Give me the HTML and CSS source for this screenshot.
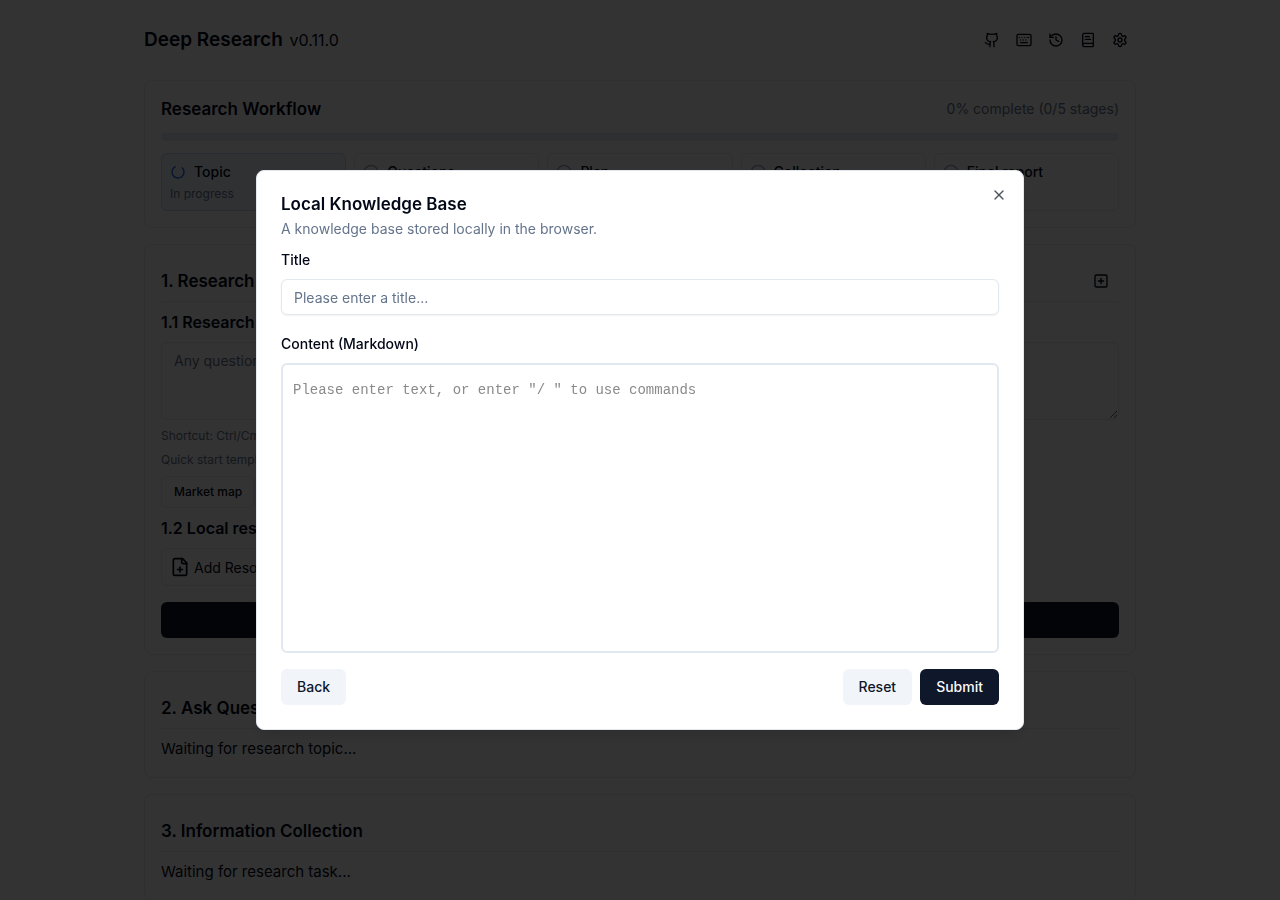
FILE: index.html
```html
<!DOCTYPE html>
<html lang="en">
<head>
  <meta charset="UTF-8" />
  <meta name="viewport" content="width=device-width, initial-scale=1" />
  <title>Deep Research</title>
  <link rel="stylesheet" href="styles.css">
</head>
<body>
  <div class="container">
    <header class="header">
      <h1>Deep Research <small>v0.11.0</small></h1>
      <div class="toolbar">
        <a class="icon-btn" href="#" aria-label="GitHub">
          <svg class="icon" viewBox="0 0 24 24"><path d="M15 22v-4a4.8 4.8 0 0 0-1-3.5c3 0 6-2 6-5.5.08-1.25-.27-2.48-1-3.5.28-1.15.28-2.35 0-3.5 0 0-1 0-3 1.5-2.64-.5-5.36-.5-8 0C6 2 5 2 5 2c-.3 1.15-.3 2.35 0 3.5A5.403 5.403 0 0 0 4 9c0 3.5 3 5.5 6 5.5-.39.49-.68 1.05-.85 1.65-.17.6-.22 1.23-.15 1.85v4"/><path d="M9 18c-4.51 2-5-2-7-2"/></svg>
        </a>
        <button class="icon-btn" aria-label="Shortcuts">
          <svg class="icon" viewBox="0 0 24 24"><rect width="21" height="17" x="1.500" y="3.500" rx="2"/><path d="M5 8h.01M9 8h.01M13 8h.01M17 8h.01M7 12h.01M11 12h.01M15 12h.01M19 8h.01M7 16h10"/></svg>
        </button>
        <button class="icon-btn" aria-label="History">
          <svg class="icon" viewBox="0 0 24 24"><path d="M3 12a9 9 0 1 0 9-9 9.75 9.75 0 0 0-6.74 2.74L3 8"/><path d="M3 3v5h5"/><path d="M12 7v5l4 2"/></svg>
        </button>
        <button class="icon-btn" aria-label="Knowledge">
          <svg class="icon" viewBox="0 0 24 24"><path d="M4 19.5v-15A2.5 2.5 0 0 1 6.5 2H19a1 1 0 0 1 1 1v18a1 1 0 0 1-1 1H6.5a1 1 0 0 1 0-5H20"/><path d="M8 11h8"/><path d="M8 7h6"/></svg>
        </button>
        <button class="icon-btn" aria-label="Setting">
          <svg class="icon" viewBox="0 0 24 24"><path d="M12.22 2h-.44a2 2 0 0 0-2 2v.18a2 2 0 0 1-1 1.73l-.43.25a2 2 0 0 1-2 0l-.15-.08a2 2 0 0 0-2.73.73l-.22.38a2 2 0 0 0 .73 2.73l.15.1a2 2 0 0 1 1 1.72v.51a2 2 0 0 1-1 1.74l-.15.09a2 2 0 0 0-.73 2.73l.22.38a2 2 0 0 0 2.73.73l.15-.08a2 2 0 0 1 2 0l.43.25a2 2 0 0 1 1 1.73V20a2 2 0 0 0 2 2h.44a2 2 0 0 0 2-2v-.18a2 2 0 0 1 1-1.73l.43-.25a2 2 0 0 1 2 0l.15.08a2 2 0 0 0 2.73-.73l.22-.39a2 2 0 0 0-.73-2.73l-.15-.08a2 2 0 0 1-1-1.74v-.5a2 2 0 0 1 1-1.74l.15-.09a2 2 0 0 0 .73-2.73l-.22-.38a2 2 0 0 0-2.73-.73l-.15.08a2 2 0 0 1-2 0l-.43-.25a2 2 0 0 1-1-1.73V4a2 2 0 0 0-2-2z"/><circle cx="12" cy="12" r="3"/></svg>
        </button>
      </div>
    </header>

    <main>
      <section class="card">
        <div class="workflow-head">
          <h2>Research Workflow</h2>
          <span>0% complete (0/5 stages)</span>
        </div>
        <div class="progress"></div>
        <div class="steps">
          <div class="step active">
            <div class="step-name">
              <svg class="icon" viewBox="0 0 24 24"><path d="M21 12a9 9 0 1 1-6.219-8.56" transform="rotate(-45 12 12)"/></svg>
              Topic
            </div>
            <p>In progress</p>
          </div>
          <div class="step">
            <div class="step-name"><svg class="icon" viewBox="0 0 24 24"><circle cx="12" cy="12" r="10"/></svg>Questions</div>
          </div>
          <div class="step">
            <div class="step-name"><svg class="icon" viewBox="0 0 24 24"><circle cx="12" cy="12" r="10"/></svg>Plan</div>
          </div>
          <div class="step">
            <div class="step-name"><svg class="icon" viewBox="0 0 24 24"><circle cx="12" cy="12" r="10"/></svg>Collection</div>
          </div>
          <div class="step">
            <div class="step-name"><svg class="icon" viewBox="0 0 24 24"><circle cx="12" cy="12" r="10"/></svg>Final report</div>
          </div>
        </div>
      </section>

      <section class="card">
        <div class="card-title">
          <h3>1. Research Topics</h3>
          <button class="icon-btn new-btn" aria-label="New research">
            <svg class="icon" viewBox="0 0 24 24"><rect width="18" height="18" x="3" y="3" rx="2"/><path d="M8 12h8"/><path d="M12 8v8"/></svg>
          </button>
        </div>
        <label class="field-title" for="topic">1.1 Research topics</label>
        <textarea class="topic" id="topic" placeholder="Any questions you want to know..."></textarea>
        <p class="hint">Shortcut: Ctrl/Cmd + Enter</p>
        <p class="hint">Quick start templates</p>
        <button class="btn-template">Market map</button>
        <h4 class="field-title">1.2 Local research resources</h4>
        <button class="btn-resource">
          <svg class="icon" viewBox="0 0 24 24"><path d="M15 2H6a2 2 0 0 0-2 2v16a2 2 0 0 0 2 2h12a2 2 0 0 0 2-2V7Z"/><path d="M14 2v4a2 2 0 0 0 2 2h4"/><path d="M9 15h6"/><path d="M12 18v-6"/></svg>
          Add Resource
        </button>
        <button class="btn btn-primary btn-start">Start Thinking</button>
      </section>

      <section class="card">
        <div class="card-title"><h3>2. Ask Questions</h3></div>
        <p>Waiting for research topic...</p>
      </section>

      <section class="card">
        <div class="card-title"><h3>3. Information Collection</h3></div>
        <p>Waiting for research task...</p>
      </section>
    </main>
  </div>

  <div class="overlay">
    <div class="modal" role="dialog" aria-modal="true" aria-labelledby="modal-title">
      <h2 id="modal-title">Local Knowledge Base</h2>
      <p class="modal-desc">A knowledge base stored locally in the browser.</p>
      <form>
        <label for="title">Title</label>
        <input id="title" type="text" placeholder="Please enter a title..." />
        <label for="content">Content (Markdown)</label>
        <textarea id="content" placeholder='Please enter text, or enter "/ " to use commands'></textarea>
        <div class="modal-footer">
          <button class="btn btn-secondary" type="button">Back</button>
          <div class="actions">
            <button class="btn btn-secondary" type="reset">Reset</button>
            <button class="btn btn-primary" type="submit">Submit</button>
          </div>
        </div>
      </form>
      <button class="close" aria-label="Close">
        <svg class="icon" viewBox="0 0 24 24"><path d="M18 6 6 18"/><path d="m6 6 12 12"/></svg>
      </button>
    </div>
  </div>
</body>
</html>
```
FILE: styles.css
```css
*, *::before, *::after {
  box-sizing: border-box;
}
body {
  margin: 0;
  height: 100vh;
  overflow: hidden;
  font-family: Inter, sans-serif;
  font-size: 16px;
  line-height: 24px;
  color: #020817;
  background: #fff;
}
h1, h2, h3, h4, p {
  margin: 0;
}
button, input, textarea {
  font-family: inherit;
  color: inherit;
}
button {
  cursor: pointer;
}
.icon {
  width: 16px;
  height: 16px;
  flex-shrink: 0;
  fill: none;
  stroke: currentColor;
  stroke-width: 2;
  stroke-linecap: round;
  stroke-linejoin: round;
}
.container {
  max-width: 1024px;
  margin: 0 auto;
  padding: 0 16px;
}
.header {
  display: flex;
  justify-content: space-between;
  align-items: center;
  height: 80px;
}
h1 {
  font-size: 19px;
  line-height: 28px;
  font-weight: 600;
}
h1 small {
  margin-left: 2px;
  font-size: 16px;
  font-weight: 400;
}
.toolbar {
  display: flex;
}
.icon-btn {
  display: flex;
  align-items: center;
  justify-content: center;
  width: 32px;
  height: 32px;
  padding: 0;
  border: none;
  background: none;
  color: inherit;
}
.card {
  padding: 16px;
  margin-bottom: 16px;
  border: 1px solid #e2e8f0;
  border-radius: 8px;
}
.card > p {
  font-size: 15px;
}
.workflow-head {
  display: flex;
  justify-content: space-between;
  align-items: center;
}
.workflow-head h2, .card-title h3 {
  font-size: 17px;
  line-height: 24px;
  font-weight: 600;
}
.workflow-head span {
  font-size: 14px;
  color: #64748b;
}
.progress {
  height: 8px;
  margin: 12px 0;
  border-radius: 4px;
  background: #e2e8f0;
}
.steps {
  display: grid;
  grid-template-columns: repeat(5, 1fr);
  gap: 8px;
}
.step {
  padding: 8px;
  border: 1px solid #e2e8f0;
  border-radius: 6px;
}
.step.active {
  border-color: #bfdbfe;
  background: #eff6ff;
}
.step-name {
  display: flex;
  align-items: center;
  gap: 8px;
  font-size: 14px;
  line-height: 20px;
  font-weight: 500;
}
.step-name .icon {
  color: #94a3b8;
}
.step.active .icon {
  color: #2563eb;
}
.step p {
  margin-top: 4px;
  font-size: 12px;
  line-height: 16px;
  color: #64748b;
}
.card-title {
  display: flex;
  justify-content: space-between;
  align-items: center;
  height: 41px;
  margin-bottom: 8px;
  border-bottom: 1px solid #e2e8f0;
}
.new-btn {
  margin-right: 2px;
}
.field-title {
  display: block;
  margin: 8px 0;
  font-size: 16px;
  font-weight: 600;
}
.topic {
  display: block;
  width: 100%;
  height: 78px;
  padding: 8px 12px;
  border: 1px solid #e2e8f0;
  border-radius: 6px;
  font-size: 14px;
  line-height: 20px;
}
.card .hint {
  margin: 8px 0;
  font-size: 12px;
  line-height: 16px;
  color: #64748b;
}
.btn-template {
  display: block;
  height: 32px;
  padding: 0 12px 2px;
  border: 1px solid #e2e8f0;
  border-radius: 6px;
  background: #fff;
  font-size: 12px;
  font-weight: 500;
}
.btn-resource {
  display: flex;
  align-items: center;
  gap: 4px;
  height: 38px;
  padding: 0 8px;
  border: 1px solid #e2e8f0;
  border-radius: 6px;
  background: #fff;
  font-size: 14px;
}
.btn-resource .icon {
  width: 20px;
  height: 20px;
}
.btn {
  height: 36px;
  padding: 0 16px 2px;
  border: none;
  border-radius: 6px;
  font-size: 14px;
  font-weight: 500;
}
.btn-primary {
  background: #0f172a;
  color: #f8fafc;
}
.btn-secondary {
  background: #f1f5f9;
  color: #0f172a;
}
.btn-start {
  display: block;
  width: 100%;
  margin-top: 16px;
}
.overlay {
  position: fixed;
  inset: 0;
  display: flex;
  align-items: center;
  justify-content: center;
  background: rgba(0, 0, 0, 0.8);
}
.modal {
  position: relative;
  width: 100%;
  max-width: 768px;
  padding: 24px;
  border: 1px solid #e2e8f0;
  border-radius: 8px;
  background: #fff;
  box-shadow: 0 10px 15px -3px rgba(0, 0, 0, 0.1), 0 4px 6px -4px rgba(0, 0, 0, 0.1);
}
.modal h2 {
  font-size: 17px;
  line-height: 18px;
  font-weight: 600;
}
.modal-desc {
  margin: 6px 0 12px;
  font-size: 14px;
  line-height: 20px;
  color: #64748b;
}
.modal label {
  display: block;
  margin-bottom: 10px;
  font-size: 14px;
  line-height: 18px;
  font-weight: 500;
}
.modal input {
  display: block;
  width: 100%;
  height: 36px;
  margin-bottom: 20px;
  padding: 4px 12px;
  border: 1px solid #e2e8f0;
  border-radius: 6px;
  font-size: 14px;
  box-shadow: 0 1px 2px rgba(0, 0, 0, 0.05);
}
::placeholder {
  color: #64748b;
  opacity: 1;
}
.modal textarea {
  display: block;
  width: 100%;
  height: 290px;
  padding: 15px 10px;
  border: 2px solid #e2e8f0;
  border-radius: 6px;
  font-family: "Courier New", "Liberation Mono", monospace;
  font-size: 14px;
  line-height: 20px;
  resize: none;
}
.modal textarea::placeholder {
  color: #8a8a8a;
}
.modal-footer {
  display: flex;
  justify-content: space-between;
  margin-top: 16px;
}
.actions {
  display: flex;
  gap: 8px;
}
.close {
  position: absolute;
  top: 16px;
  right: 16px;
  display: flex;
  padding: 0;
  border: none;
  background: none;
  opacity: 0.7;
}
```
